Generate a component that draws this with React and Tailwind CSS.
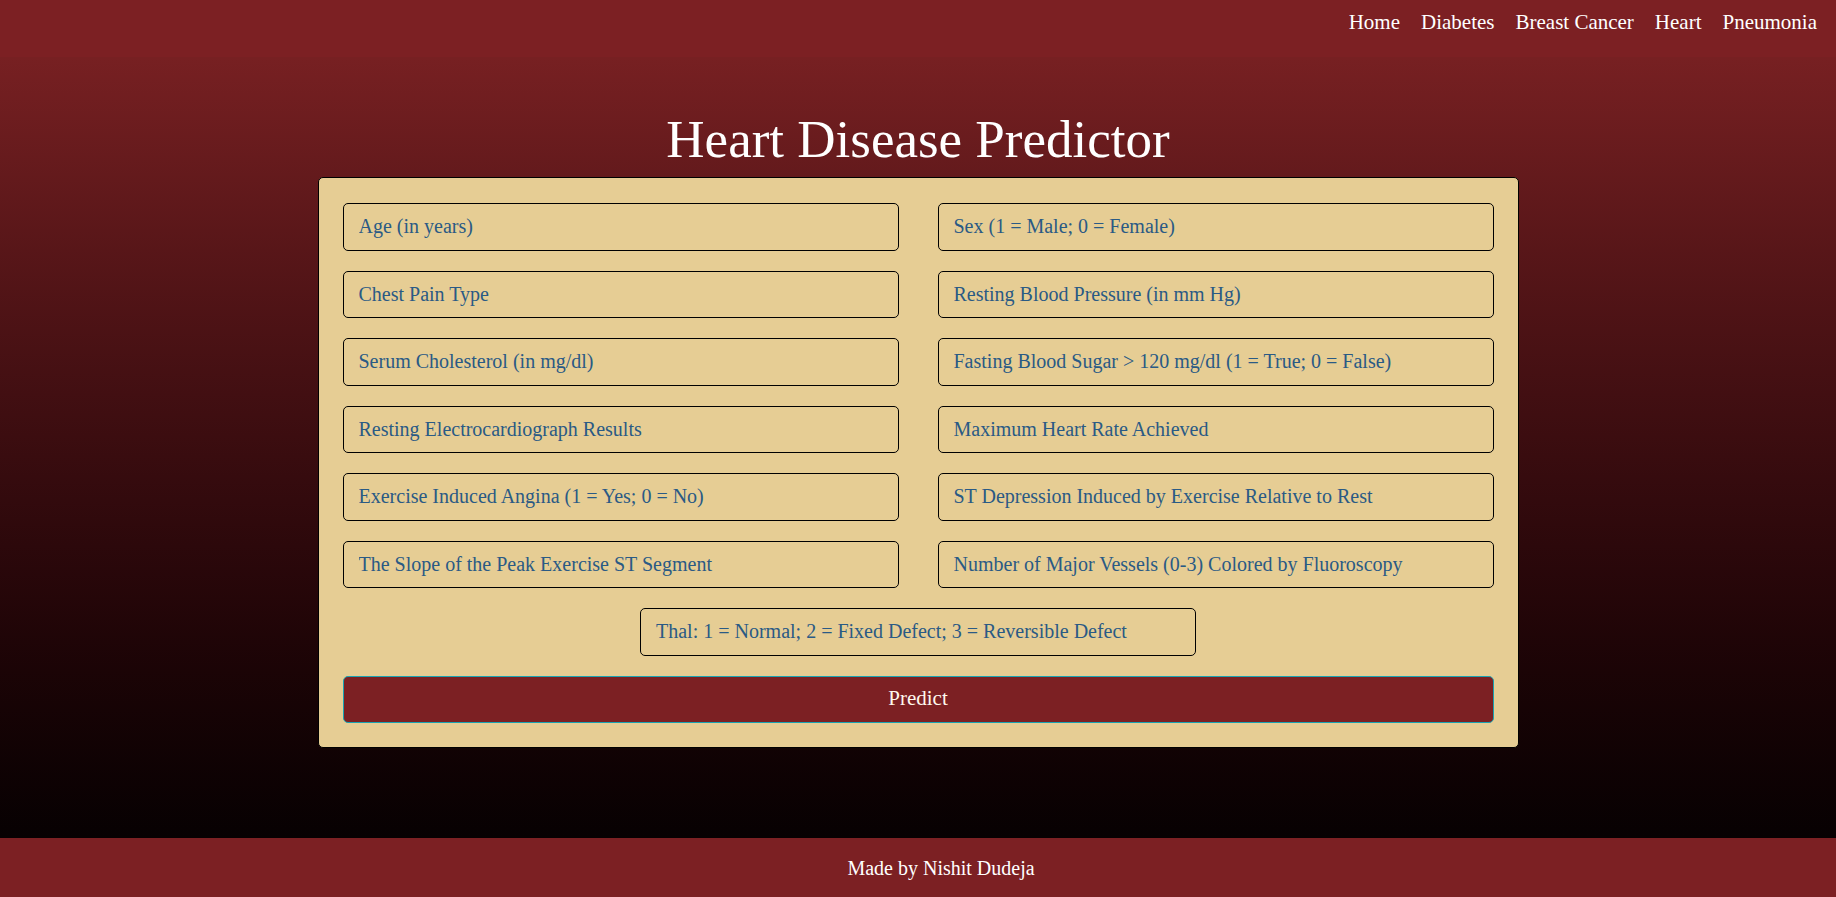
import React from 'react'

const fields = [
  'Age (in years)',
  'Sex (1 = Male; 0 = Female)',
  'Chest Pain Type',
  'Resting Blood Pressure (in mm Hg)',
  'Serum Cholesterol (in mg/dl)',
  'Fasting Blood Sugar > 120 mg/dl (1 = True; 0 = False)',
  'Resting Electrocardiograph Results',
  'Maximum Heart Rate Achieved',
  'Exercise Induced Angina (1 = Yes; 0 = No)',
  'ST Depression Induced by Exercise Relative to Rest',
  'The Slope of the Peak Exercise ST Segment',
  'Number of Major Vessels (0-3) Colored by Fluoroscopy',
]

const links = ['Home', 'Diabetes', 'Breast Cancer', 'Heart', 'Pneumonia']

function Field({ placeholder, className = '' }) {
  return (
    <input
      type="text"
      placeholder={placeholder}
      className={
        'h-[47.5px] w-full rounded-[5px] border border-black bg-transparent px-[15px] text-[20px] text-[#2a5a85] placeholder:text-[#2a5a85] outline-none ' +
        className
      }
    />
  )
}

export default function App() {
  return (
    <div className="flex h-screen flex-col font-['Liberation_Serif',serif]">
      <nav className="flex h-[57px] shrink-0 items-center justify-end gap-[21px] bg-[#7c2023] pr-[19px] pb-[11px]">
        {links.map((l) => (
          <a key={l} href="#" className="text-[21px] text-white">
            {l}
          </a>
        ))}
      </nav>

      <main className="flex-1 bg-gradient-to-b from-[#772022] to-[#070102] pt-[50px]">
        <h1 className="mb-[6px] text-center text-[53px] leading-[64px] text-white">
          Heart Disease Predictor
        </h1>

        <form
          onSubmit={(e) => e.preventDefault()}
          className="mx-auto w-[1201px] rounded-[5px] border border-black bg-[#e6cd94] px-6 pt-[25px] pb-6"
        >
          <div className="grid grid-cols-2 gap-x-[39px] gap-y-5">
            {fields.map((f) => (
              <Field key={f} placeholder={f} />
            ))}
          </div>

          <div className="mt-5 flex justify-center">
            <div className="w-[556px]">
              <Field placeholder="Thal: 1 = Normal; 2 = Fixed Defect; 3 = Reversible Defect" />
            </div>
          </div>

          <button
            type="submit"
            className="mt-5 h-[47px] w-full rounded-[5px] border border-[#1aa3b3] bg-[#7c2023] text-[21px] text-[#fff8ee]"
          >
            Predict
          </button>
        </form>
      </main>

      <footer className="flex h-[59px] shrink-0 items-center justify-center bg-[#7c2023] pl-[46px] text-[20px] text-white">
        Made by Nishit Dudeja
      </footer>
    </div>
  )
}
